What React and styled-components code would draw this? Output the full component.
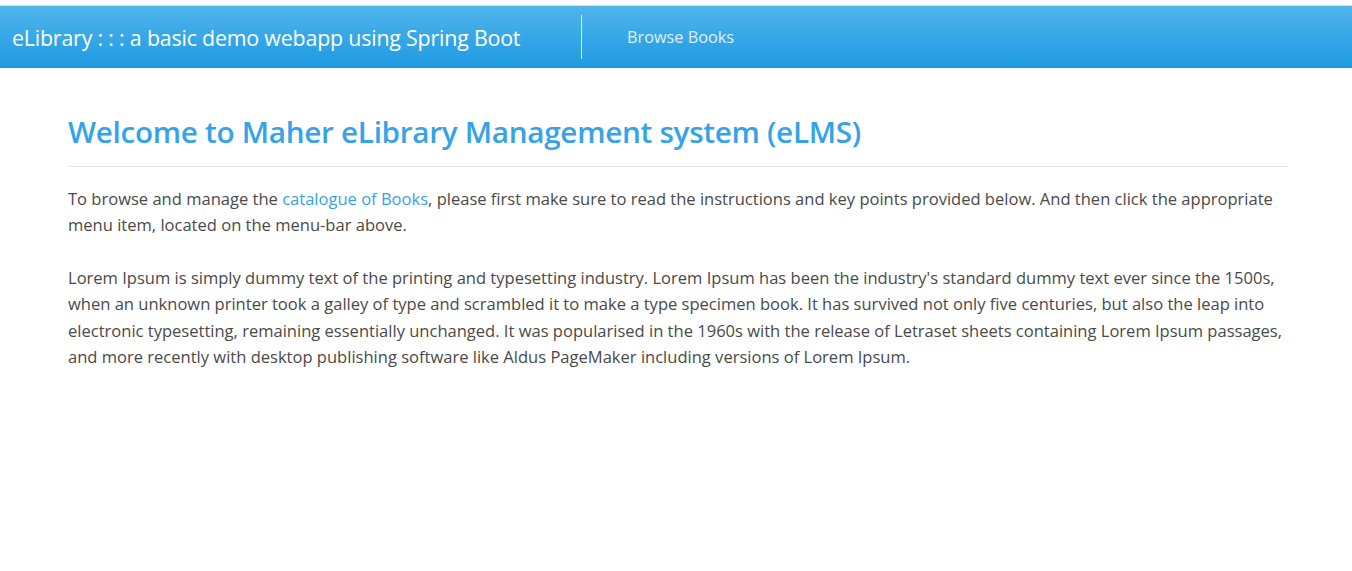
import React from "react";
import styled, { createGlobalStyle } from "styled-components";

const Global = createGlobalStyle`
  html, body { margin: 0; padding: 0; background: #fff; }
  body {
    padding-top: 5px;
    font-family: "Open Sans", "Noto Sans", sans-serif;
    color: #444;
  }
`;

const Navbar = styled.nav`
  height: 62px;
  border-top: 1px solid #d9d9d9;
  background: linear-gradient(to bottom, #50b4ec 0%, #1e9ae2 100%);
  display: flex;
  align-items: center;
`;

const Brand = styled.a`
  font-size: 21.4px;
  color: #fff;
  padding-left: 12px;
  width: 569px;
  text-decoration: none;
  white-space: nowrap;
  letter-spacing: -0.2px;
`;

const Divider = styled.div`
  width: 1px;
  height: 44px;
  background: #fff;
  opacity: 0.9;
`;

const NavLink = styled.a`
  margin-left: 45px;
  font-size: 16.3px;
  color: #dff0fb;
  text-decoration: none;
`;

const Container = styled.main`
  width: 1220px;
  margin-left: 68px;
  padding-top: 45px;
`;

const Title = styled.h1`
  margin: 0;
  font-size: 29.7px;
  font-weight: 600;
  color: #36a3e8;
  line-height: 38px;
  letter-spacing: -0.3px;
  padding-bottom: 15px;
  border-bottom: 1px solid #e5e5e5;
`;

const Para = styled.p`
  margin: 0;
  font-size: 16.55px;
  line-height: 26.4px;
  color: #4a4a4a;
  margin-top: ${(p) => p.$top}px;
`;

const Link = styled.a`
  color: #36a3e8;
  text-decoration: none;
`;

export default function App() {
  return (
    <>
      <Global />
      <Navbar>
        <Brand href="#">eLibrary : : : a basic demo webapp using Spring Boot</Brand>
        <Divider />
        <NavLink href="#">Browse Books</NavLink>
      </Navbar>
      <Container>
        <Title>Welcome to Maher eLibrary Management system (eLMS)</Title>
        <Para $top={19}>
          To browse and manage the <Link href="#">catalogue of Books</Link>, please first make sure to
          read the instructions and key points provided below. And then click the appropriate menu
          item, located on the menu-bar above.
        </Para>
        <Para $top={26}>
          Lorem Ipsum is simply dummy text of the printing and typesetting industry. Lorem Ipsum has
          been the industry's standard dummy text ever since the 1500s, when an unknown printer took a
          galley of type and scrambled it to make a type specimen book. It has survived not only five
          centuries, but also the leap into electronic typesetting, remaining essentially unchanged. It
          was popularised in the 1960s with the release of Letraset sheets containing Lorem Ipsum
          passages, and more recently with desktop publishing software like Aldus PageMaker including
          versions of Lorem Ipsum.
        </Para>
      </Container>
    </>
  );
}
